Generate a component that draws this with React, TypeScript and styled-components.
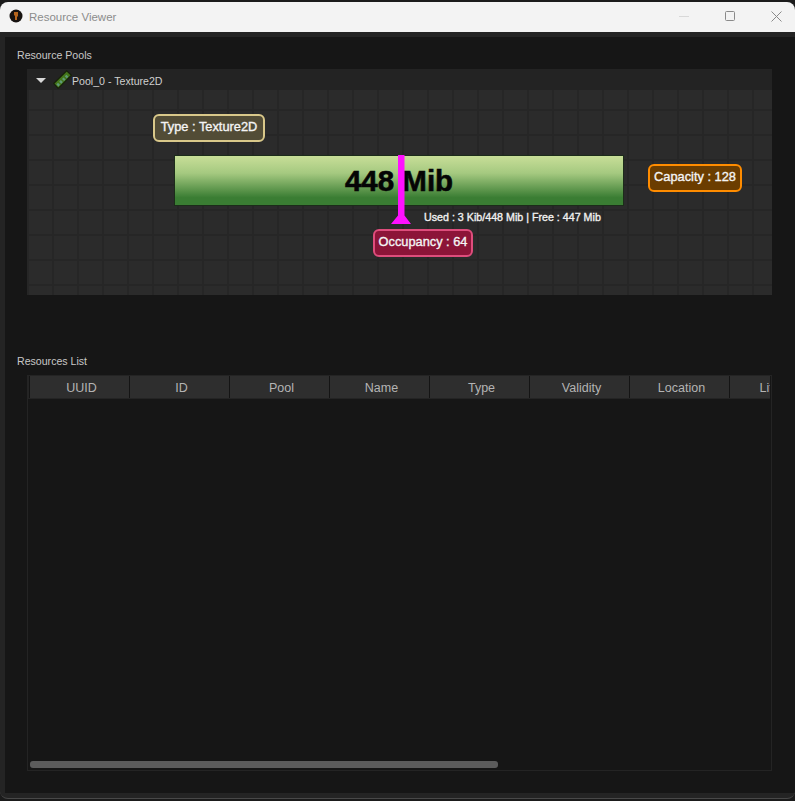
import styled, { createGlobalStyle } from 'styled-components';

const GlobalStyle = createGlobalStyle`
  html, body {
    margin: 0;
    padding: 0;
    background: #1b1b1b;
    overflow: hidden;
  }
  * { box-sizing: border-box; }
`;

const Screen = styled.div`
  width: 795px;
  height: 801px;
  padding-top: 2px;
  display: flex;
  flex-direction: column;
  font-family: "Liberation Sans", Arial, sans-serif;
  overflow: hidden;
`;

const Window = styled.div`
  height: 797px;
  flex-shrink: 0;
  display: flex;
  flex-direction: column;
  background: #242424;
  border-bottom: 1px solid #484848;
  border-radius: 8px;
  overflow: hidden;
`;

const TitleBar = styled.div`
  height: 30px;
  flex-shrink: 0;
  display: flex;
  align-items: center;
  gap: 16px;
  padding: 0 4px 0 9px;
  background: #f3f3f3;
`;

const AppIcon = styled.svg`
  width: 14px;
  height: 14px;
  margin: -2px -10px 0 0;
`;

const TitleText = styled.span`
  flex: 1;
  font-size: 11.5px;
  color: #8c8c8c;
`;

const WinButton = styled.div`
  width: 30px;
  height: 28px;
  margin-bottom: 2px;
  display: flex;
  align-items: center;
  justify-content: center;

  svg { display: block; }
`;

const Body = styled.div`
  flex: 1;
  margin: 5px 0 5px 5px;
  padding: 8px 23px 0 12px;
  background: #161616;
  display: flex;
  flex-direction: column;
`;

const SectionLabel = styled.div`
  height: 20px;
  display: flex;
  align-items: center;
  font-size: 10.6px;
  color: #c8c8c8;
`;

const PoolBox = styled.div`
  margin: 4px 0 0 10px;
  height: 226px;
  display: flex;
  flex-direction: column;
`;

const PoolHeader = styled.div`
  height: 21px;
  flex-shrink: 0;
  display: flex;
  align-items: center;
  padding: 2px 0 0 9px;
  background: #232323;
  font-size: 10.6px;
  color: #cfcfcf;
`;

const Caret = styled.div`
  width: 0;
  height: 0;
  border-left: 5px solid transparent;
  border-right: 5px solid transparent;
  border-top: 5px solid #d8d8d8;
  margin-right: 7px;
`;

const ChipIcon = styled.svg`
  width: 19px;
  height: 19px;
  margin-top: -2px;
`;

const Canvas = styled.div`
  position: relative;
  flex: 1;
  background-color: #2b2b2b;
  background-image:
    linear-gradient(to right, #262626 2px, transparent 2px),
    linear-gradient(to bottom, #262626 2px, transparent 2px);
  background-size: 25px 25px;
  background-position: 0 19px;
`;

const Tag = styled.div<{ $x: number; $y: number; $w: number; $bg: string; $line: string }>`
  position: absolute;
  left: ${({ $x }) => $x}px;
  top: ${({ $y }) => $y}px;
  width: ${({ $w }) => $w}px;
  height: 28px;
  padding-bottom: 3px;
  display: flex;
  align-items: center;
  justify-content: center;
  white-space: nowrap;
  background: ${({ $bg }) => $bg};
  border: 2px solid ${({ $line }) => $line};
  border-radius: 6px;
  font-size: 12.8px;
  color: #f4f4f4;
  -webkit-text-stroke: 0.35px #f4f4f4;
`;

const PoolBar = styled.div`
  position: absolute;
  left: 147px;
  top: 65px;
  width: 450px;
  height: 51px;
  display: flex;
  align-items: center;
  justify-content: center;
  background: linear-gradient(to bottom, #c8de98 0%, #a5c980 35%, #3a7d33 85%, #3a7d33 100%);
  border: 1px solid #1c2c1a;
  font-size: 29.5px;
  font-weight: 700;
  color: #050505;
  -webkit-text-stroke: 0.6px #050505;
`;

const Marker = styled.svg`
  position: absolute;
  left: 363px;
  top: 65px;
  width: 22px;
  height: 69px;
`;

const UsageText = styled.div`
  position: absolute;
  left: 397px;
  top: 121px;
  font-size: 10.7px;
  color: #f0f0f0;
  -webkit-text-stroke: 0.35px #f0f0f0;
  white-space: nowrap;
`;

const ListLabel = styled(SectionLabel)`
  margin-top: 56px;
`;

const Table = styled.div`
  margin: 4px 0 0 10px;
  height: 396px;
  position: relative;
  border: 1px solid #242424;
  overflow: hidden;
`;

const HeaderRow = styled.div`
  height: 23px;
  margin-right: 1px;
  display: flex;
  padding: 0 0 1px 1px;
  background: #242424;
  overflow: hidden;
`;

const HeaderCell = styled.div`
  width: 100px;
  flex-shrink: 0;
  display: flex;
  align-items: center;
  justify-content: center;
  padding: 2px 0 0 4px;
  background: #2e2e2e;
  border-left: 1px solid #141414;
  font-size: 12.5px;
  color: #b4b4b4;
`;

const ScrollThumb = styled.div`
  position: absolute;
  left: 2px;
  bottom: 2px;
  width: 468px;
  height: 7px;
  border-radius: 3px;
  background: #5c5c5c;
`;

const DesktopPeek = styled.div`
  height: 2px;
  padding-left: 413px;
  overflow: hidden;
  font-size: 13px;
  line-height: 13px;
  word-spacing: 6px;
  color: #8a8a8a;
  white-space: nowrap;
`;

const columns = ['UUID', 'ID', 'Pool', 'Name', 'Type', 'Validity', 'Location', 'Lifetime'];

function App() {
  return (
    <Screen>
      <GlobalStyle />
      <Window>
        <TitleBar>
          <AppIcon viewBox="0 0 14 14">
            <circle cx="7" cy="7" r="6.5" fill="#171310" />
            <path d="M5 3h4v4l-1 1v3H6V7L5 6z" fill="#b5651d" />
          </AppIcon>
          <TitleText>Resource Viewer</TitleText>
          <WinButton>
            <svg width="10" height="10" viewBox="0 0 10 10">
              <path d="M0 5.5h10" stroke="#d8d8d8" strokeWidth="1" />
            </svg>
          </WinButton>
          <WinButton>
            <svg width="10" height="10" viewBox="0 0 10 10">
              <rect x="0.5" y="0.5" width="9" height="9" rx="1" fill="none" stroke="#8a8a8a" />
            </svg>
          </WinButton>
          <WinButton>
            <svg width="11" height="11" viewBox="0 0 11 11">
              <path d="M.5.5l10 10M10.5.5l-10 10" stroke="#8a8a8a" strokeWidth="1" />
            </svg>
          </WinButton>
        </TitleBar>
        <Body>
          <SectionLabel>Resource Pools</SectionLabel>
          <PoolBox>
            <PoolHeader>
              <Caret />
              <ChipIcon viewBox="0 0 19 19">
                <path d="M0.7 13.5L13.7 0.8l4.7 4.4L5.2 18.4z" fill="#44761a" stroke="#16200a" strokeWidth="1.2" />
                <path d="M4.2 13.6l2 2M7 10.9l2 2M9.8 8.2l2 2M12.6 5.5l2 2" stroke="#5f9a78" strokeWidth="2.2" />
              </ChipIcon>
              Pool_0 - Texture2D
            </PoolHeader>
            <Canvas>
              <Tag $x={126} $y={24} $w={112} $bg="#524c36" $line="#d9c88a">Type : Texture2D</Tag>
              <PoolBar>448 Mib</PoolBar>
              <Marker viewBox="0 0 22 69">
                <path d="M8 0h6.5v60.5l6.5 8.5H1l7-8.5z" fill="#ff10ff" />
              </Marker>
              <UsageText>Used : 3 Kib/448 Mib | Free : 447 Mib</UsageText>
              <Tag $x={621} $y={74} $w={94} $bg="#6b3d00" $line="#ff8c00">Capacity : 128</Tag>
              <Tag $x={346} $y={139} $w={100} $bg="#8c1438" $line="#de4d7c">Occupancy : 64</Tag>
            </Canvas>
          </PoolBox>
          <ListLabel>Resources List</ListLabel>
          <Table>
            <HeaderRow>
              {columns.map((c) => (
                <HeaderCell key={c}>{c}</HeaderCell>
              ))}
            </HeaderRow>
            <ScrollThumb />
          </Table>
        </Body>
      </Window>
      <DesktopPeek>T Q Sou JUI</DesktopPeek>
    </Screen>
  );
}

export default App;
